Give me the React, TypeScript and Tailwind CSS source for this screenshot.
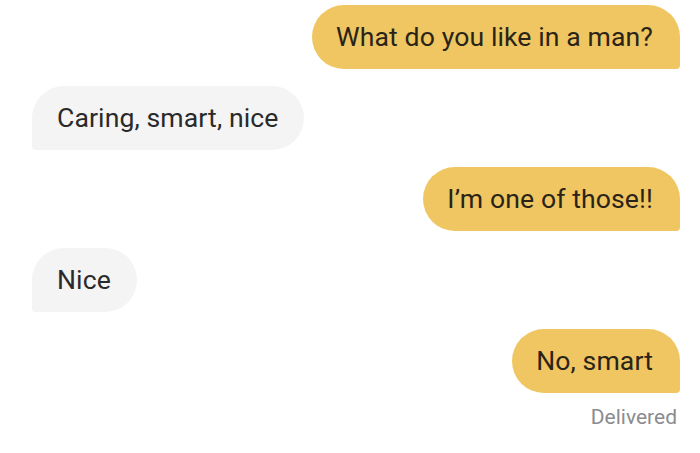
const messages = [
  { text: "What do you like in a man?", mine: true },
  { text: "Caring, smart, nice", mine: false },
  { text: "I’m one of those!!", mine: true },
  { text: "Nice", mine: false },
  { text: "No, smart", mine: true },
];

export default function App() {
  return (
    <div
      className="w-[700px] h-[453px] bg-white pt-[5px] pl-[32px] pr-[20px] flex flex-col gap-[17px] overflow-hidden"
      style={{ fontFamily: "Roboto, 'Liberation Sans', sans-serif" }}
    >
      {messages.map((m, i) => (
        <div key={i} className={m.mine ? "flex justify-end" : "flex justify-start"}>
          <div
            className={
              m.mine
                ? "h-[64px] flex items-center pl-[24px] pr-[27px] text-[26.6px] tracking-[0.1px] text-[#2a2418] bg-[#efc661] rounded-[32px] rounded-br-[4px]"
                : "h-[64px] flex items-center pl-[25px] pr-[26px] text-[26.6px] tracking-[0.1px] text-[#2a2a2a] bg-[#f4f4f4] rounded-[32px] rounded-bl-[4px]"
            }
          >
            {m.text}
          </div>
        </div>
      ))}
      <div className="-mt-[8px] flex justify-end pr-[3px] text-[21px] text-[#8b8b8f]">Delivered</div>
    </div>
  );
}
